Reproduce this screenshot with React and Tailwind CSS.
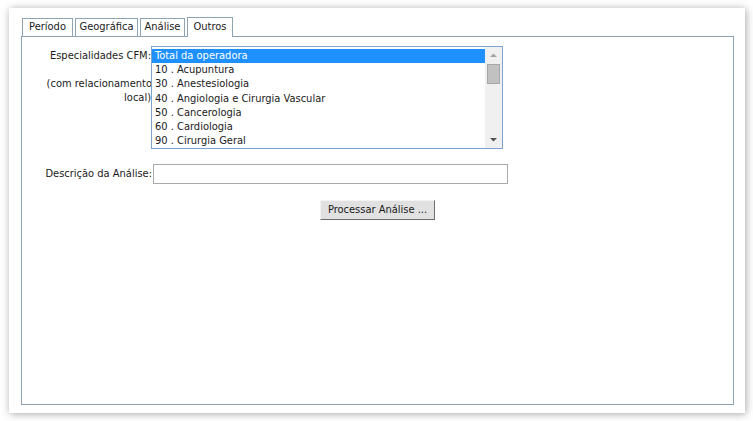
import React from "react";

const font = { fontFamily: '"DejaVu Sans Condensed", "DejaVu Sans", "Liberation Sans", sans-serif' };

const options = [
  "Total da operadora",
  "10 . Acupuntura",
  "30 . Anestesiologia",
  "40 . Angiologia e Cirurgia Vascular",
  "50 . Cancerologia",
  "60 . Cardiologia",
  "90 . Cirurgia Geral",
];

function Tab({ label, active, w }) {
  if (active) {
    return (
      <div className={"relative z-10 -mb-px h-[20px] border border-b-0 border-[#8fa4b3] bg-white pt-[2px] text-center leading-[14px] " + w}>
        {label}
      </div>
    );
  }
  return (
    <div className={"h-[18px] border border-b-0 border-[#8fa4b3] bg-white pt-[1px] text-center leading-[14px] " + w}>
      {label}
    </div>
  );
}

export default function App() {
  return (
    <div className="h-[421px] overflow-hidden bg-white pl-[9px] pr-[8px] pt-[8px] text-[11px] text-[#1a1a1a]" style={font}>
      <div className="flex h-[405px] flex-col bg-white pl-[12px] pr-[11px] pt-[9px] shadow-[1px_1px_8px_rgba(0,0,0,0.35)]">
        <div className="flex items-end gap-[2px] pl-px">
          <Tab label="Período" w="w-[51px]" />
          <Tab label="Geográfica" w="w-[63px]" />
          <Tab label="Análise" w="w-[45px]" />
          <Tab label="Outros" w="w-[46px]" active />
        </div>
        <div className="flex h-[369px] flex-col border border-[#8fa4b3] pt-[9px]">
          <div className="flex">
            <div className="w-[129px] pt-[3px] text-right leading-[14px]">
              <div>Especialidades CFM:</div>
              <div>&nbsp;</div>
              <div className="mr-[-1px]">(com relacionamento</div>
              <div>local)</div>
            </div>
            <div className="flex h-[103px] w-[352px] border border-[#7fa3d1] bg-white">
              <div className="flex-1 pt-[2px]">
                {options.map((o, i) => (
                  <div
                    key={o}
                    className={
                      "h-[14.2px] pl-[3px] leading-[14px] " +
                      (i === 0 ? "bg-[#1e90ff] text-white" : "")
                    }
                  >
                    {o}
                  </div>
                ))}
              </div>
              <div className="flex w-[17px] flex-col items-center bg-[#f0f0f0]">
                <svg width="17" height="17" viewBox="0 0 17 17">
                  <path d="M5 10 L8.5 6.5 L12 10 Z" fill="#a3a3a3" />
                </svg>
                <div className="h-[20px] w-[13px] border border-[#a8a8a8] bg-[#c1c1c1]" />
                <div className="flex-1" />
                <svg width="17" height="17" viewBox="0 0 17 17">
                  <path d="M5 7 L12 7 L8.5 10.5 Z" fill="#505050" />
                </svg>
              </div>
            </div>
          </div>
          <div className="mt-[15px] flex items-center">
            <div className="w-[131px] pr-[1px] text-right leading-[14px]">Descrição da Análise:</div>
            <div className="h-[20px] w-[355px] border border-[#a9a9a9] bg-white" />
          </div>
          <div className="mt-[16px] flex justify-center">
            <div className="flex h-[20px] w-[115px] items-center justify-center border border-t-[#f4f4f4] border-l-[#f4f4f4] border-r-[#6d6d6d] border-b-[#6d6d6d] bg-[#e1e1e1] leading-[14px]">
              Processar Análise ...
            </div>
          </div>
        </div>
      </div>
    </div>
  );
}
